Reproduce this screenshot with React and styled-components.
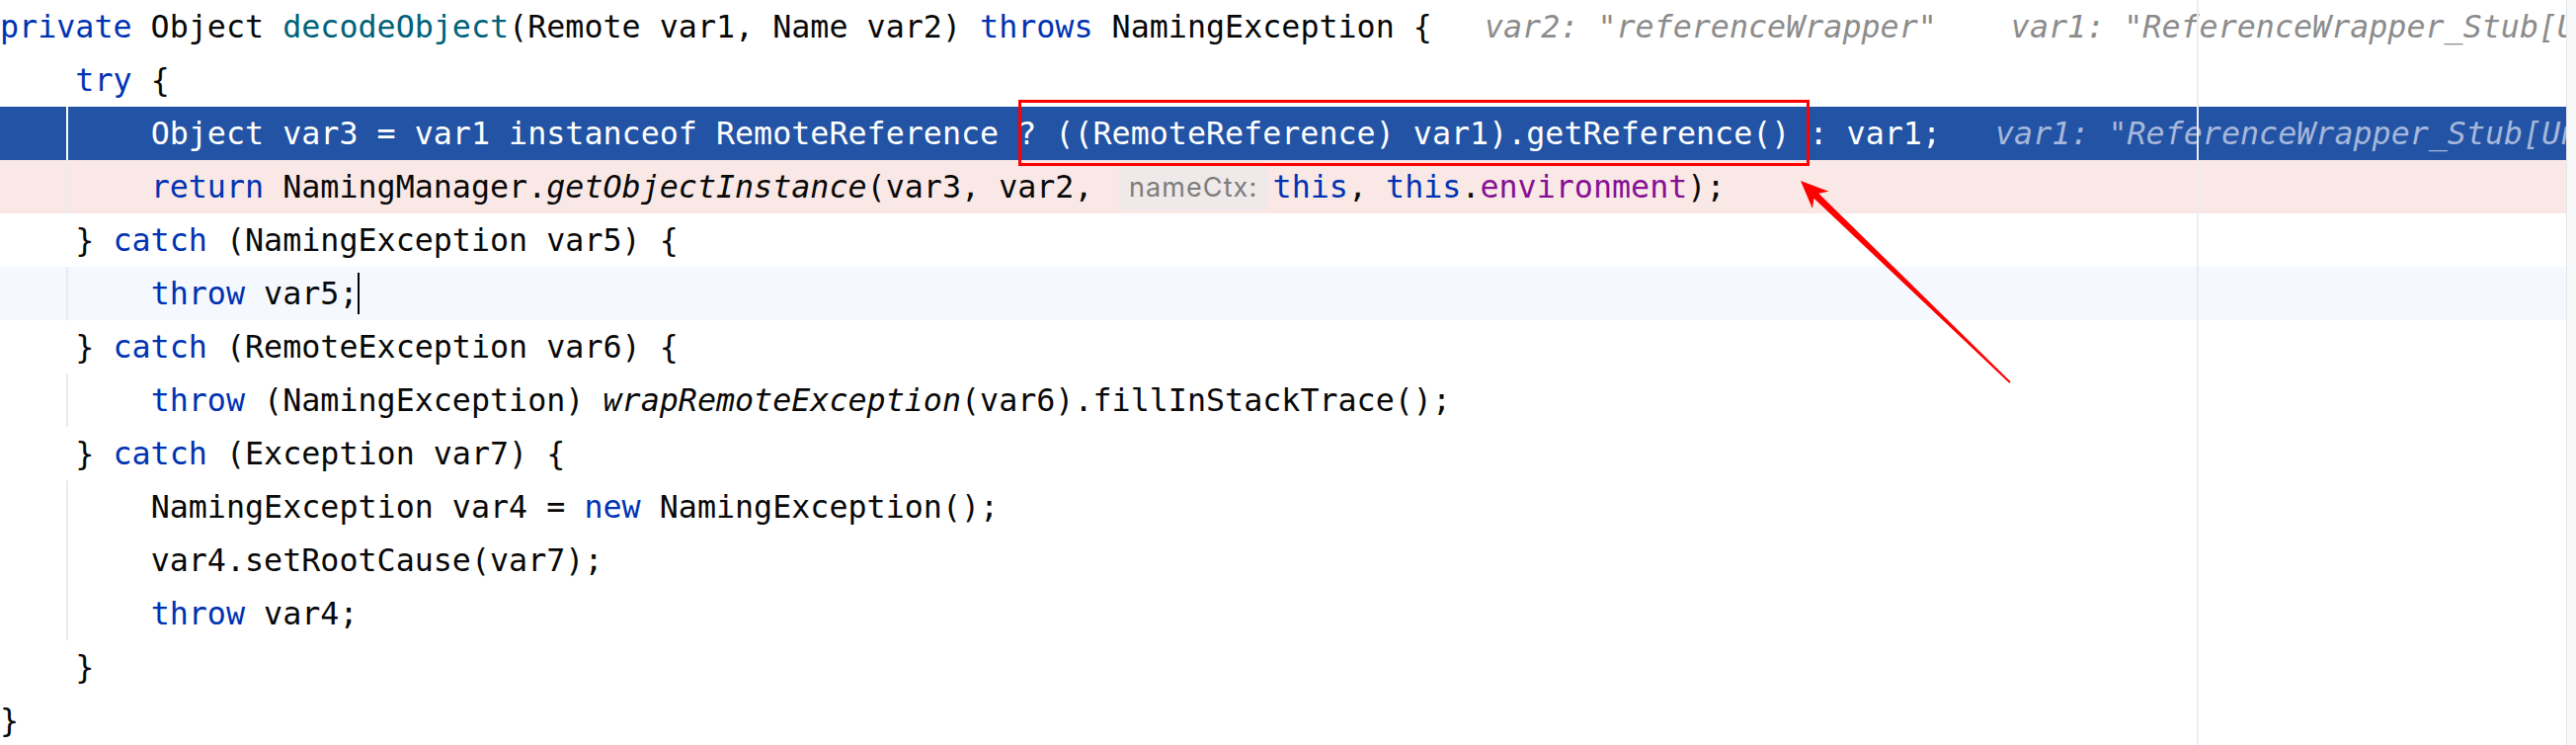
import styled, { createGlobalStyle } from "styled-components";

const GlobalStyle = createGlobalStyle`
  html, body {
    margin: 0;
    padding: 0;
    background: #ffffff;
    overflow: hidden;
  }
`;

const tones = {
  plain: "#ffffff",
  exec: "#2253a5",
  breakpoint: "#fae8e6",
  caret: "#f5f8fe",
};

const Screen = styled.div`
  position: relative;
  display: flex;
  width: 2608px;
  height: 754px;
  overflow: hidden;
  background: #ffffff;
`;

const Editor = styled.div`
  position: relative;
  flex: 1;
  display: flex;
  flex-direction: column;
  overflow: hidden;
  font-family: "DejaVu Sans Mono", "Liberation Mono", monospace;
  font-size: 31.7px;
  color: #080808;
`;

const ScrollStrip = styled.div`
  width: 9px;
  flex-shrink: 0;
  background: #f7f8fa;
  border-left: 1px solid #e4e6ea;
`;

const Row = styled.div`
  position: relative;
  flex-shrink: 0;
  height: 54px;
  line-height: 54px;
  white-space: pre;
  overflow: hidden;
  background: ${(p) => tones[p.$tone || "plain"]};
  color: ${(p) => (p.$tone === "exec" ? "#ffffff" : "#080808")};

  &::before {
    content: "";
    display: ${(p) => (p.$guide ? "block" : "none")};
    position: absolute;
    left: 67px;
    top: 0;
    bottom: 0;
    width: 2px;
    background: ${(p) => (p.$tone === "exec" ? "#ffffff" : "#ebecf0")};
  }
`;

const MarginLine = styled.div`
  position: absolute;
  left: 2224px;
  top: 0;
  bottom: 0;
  width: 2px;
  background: #ebedf0;
`;

const Kw = styled.span`
  color: #0033b3;
`;

const Decl = styled.span`
  color: #00627a;
`;

const Field = styled.span`
  color: #871094;
`;

const Static = styled.span`
  font-style: italic;
`;

const Hint = styled.span`
  margin-left: ${(p) => p.$gap}px;
  font-style: italic;
  color: ${(p) => (p.$onExec ? "#a6b7da" : "#8c8c8c")};
`;

const ParamHint = styled.span`
  display: inline-block;
  vertical-align: top;
  box-sizing: border-box;
  width: 151px;
  height: 44px;
  margin: 6px 5px 0 7px;
  border-radius: 5px;
  background: #efe9e9;
  color: #7c7c7c;
  font-family: Inter, "Noto Sans", sans-serif;
  font-size: 27px;
  letter-spacing: 1.1px;
  line-height: 44px;
  text-align: center;
`;

const Caret = styled.span`
  display: inline-block;
  vertical-align: top;
  width: 2px;
  height: 42px;
  margin-top: 6px;
  background: #000000;
`;

const Highlight = styled.div`
  position: absolute;
  left: 1031px;
  top: 101px;
  width: 801px;
  height: 67px;
  box-sizing: border-box;
  border: 3px solid #ff0000;
  pointer-events: none;
`;

const Overlay = styled.svg`
  position: absolute;
  left: 0;
  top: 0;
  pointer-events: none;
`;

const I4 = "    ";
const I8 = "        ";

export default function App() {
  return (
    <>
      <GlobalStyle />
      <Screen>
        <Editor>
          <Row>
            <Kw>private</Kw> Object <Decl>decodeObject</Decl>(Remote var1, Name var2){" "}
            <Kw>throws</Kw> NamingException {"{"}
            <Hint $gap={53}>var2: "referenceWrapper"</Hint>
            <Hint $gap={75}>
              var1: "ReferenceWrapper_Stub[UnicastRef [liveRef: [endpoint:[127.0.0.1:1099](remote)]]]"
            </Hint>
          </Row>
          <Row>
            {I4}
            <Kw>try</Kw> {"{"}
          </Row>
          <Row $tone="exec" $guide>
            {I8}Object var3 = var1 instanceof RemoteReference ? ((RemoteReference) var1).getReference() : var1;
            <Hint $gap={55} $onExec>
              var1: "ReferenceWrapper_Stub[UnicastRef [liveRef: [endpoint:[127.0.0.1:1099](remote)]]]"
            </Hint>
          </Row>
          <Row $tone="breakpoint" $guide>
            {I8}
            <Kw>return</Kw> NamingManager.<Static>getObjectInstance</Static>(var3, var2,{" "}
            <ParamHint>nameCtx:</ParamHint>
            <Kw>this</Kw>, <Kw>this</Kw>.<Field>environment</Field>);
          </Row>
          <Row>
            {I4}
            {"} "}
            <Kw>catch</Kw> (NamingException var5) {"{"}
          </Row>
          <Row $tone="caret" $guide>
            {I8}
            <Kw>throw</Kw> var5;
            <Caret />
          </Row>
          <Row>
            {I4}
            {"} "}
            <Kw>catch</Kw> (RemoteException var6) {"{"}
          </Row>
          <Row $guide>
            {I8}
            <Kw>throw</Kw> (NamingException) <Static>wrapRemoteException</Static>(var6).fillInStackTrace();
          </Row>
          <Row>
            {I4}
            {"} "}
            <Kw>catch</Kw> (Exception var7) {"{"}
          </Row>
          <Row $guide>
            {I8}NamingException var4 = <Kw>new</Kw> NamingException();
          </Row>
          <Row $guide>{I8}var4.setRootCause(var7);</Row>
          <Row $guide>
            {I8}
            <Kw>throw</Kw> var4;
          </Row>
          <Row>
            {I4}
            {"}"}
          </Row>
          <Row>{"}"}</Row>
          <MarginLine />
        </Editor>
        <ScrollStrip />
        <Highlight />
        <Overlay width="2608" height="754" viewBox="0 0 2608 754">
          <polygon
            fill="#ff0000"
            points="1823,183 1834.9,211 1836.5,200.8 2034.3,387.7 2035.7,386.3 1841.3,195.8 1851.5,193.8"
          />
        </Overlay>
      </Screen>
    </>
  );
}
